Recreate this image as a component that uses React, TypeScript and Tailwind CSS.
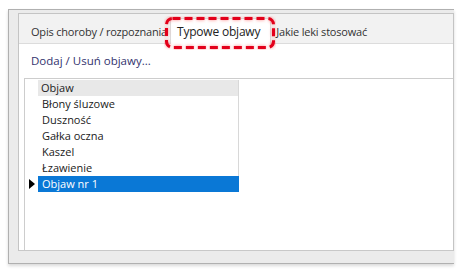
import React from "react";

const ROWS = ["Błony śluzowe", "Duszność", "Gałka oczna", "Kaszel", "Łzawienie", "Objaw nr 1"];

export default function App() {
  const font = { fontFamily: '"Open Sans", "Noto Sans", sans-serif' };
  return (
    <div className="w-[464px] h-[277px] bg-white pl-[8px] pt-[9px] relative" style={font}>
      {/* outer frame */}
      <div className="w-[446px] h-[255px] border border-[#b0b0b0] border-r-0 bg-[#ebebeb] pl-[9px] pt-[3px] shadow-[0_2px_3px_rgba(0,0,0,0.15)]">
        <div className="w-[436px] h-[238px] border-l border-t border-r border-[#c4c4c4] flex flex-col bg-white">
          {/* tab strip */}
          <div className="h-[30px] bg-[#f2f2f2] border-b border-[#dcdcdc] flex items-end pl-[10px] text-[11px] text-[#333] tracking-[-0.2px]">
            <div className="h-[22px] px-[2px] flex items-center">Opis choroby / rozpoznania</div>
            <div className="h-[26px] ml-[1px] pl-[6px] pr-[10px] flex items-center bg-white border-x border-t border-[#dcdcdc] -mb-px text-[12px] text-[#222]">
              Typowe objawy
            </div>
            <div className="h-[22px] pl-[5px] flex items-center">Jakie leki stosować</div>
          </div>
          {/* content */}
          <div className="flex-1 flex flex-col bg-white border-b border-[#c8c8c8]">
            <div className="h-[34px] pl-[12px] flex items-center text-[11.5px] text-[#33336e]">Dodaj / Usuń objawy...</div>
            <div className="flex-1 ml-[5px] border-l border-t border-[#cdcdcd] flex">
              <div className="w-[13px] flex flex-col pt-[17px]">
                {ROWS.map((r, i) => (
                  <div key={r} className="h-[16px] flex items-center justify-center">
                    {i === ROWS.length - 1 && (
                      <svg width="6" height="10" viewBox="0 0 6 10">
                        <path d="M0 0 L6 5 L0 10 Z" fill="#000" />
                      </svg>
                    )}
                  </div>
                ))}
              </div>
              <div className="w-[201px] flex flex-col pt-px">
                <div className="h-[16px] bg-[#e8e8e8] border-r border-[#d8d8d8] pl-[3px] flex items-center text-[11px] text-[#222]">Objaw</div>
                {ROWS.map((r, i) => (
                  <div
                    key={r}
                    className={
                      i === ROWS.length - 1
                        ? "h-[16px] bg-[#0a78d6] text-white pl-[4px] flex items-center text-[11px]"
                        : "h-[16px] border-r border-[#d8d8d8] pl-[4px] flex items-center text-[11px] text-[#1a1a1a]"
                    }
                  >
                    {r}
                  </div>
                ))}
              </div>
            </div>
          </div>
        </div>
      </div>
      {/* highlight around selected tab */}
      <svg className="absolute left-[164px] top-[16px]" width="112" height="34" viewBox="0 0 112 34">
        <defs>
          <filter id="glow" x="-10%" y="-30%" width="120%" height="160%">
            <feGaussianBlur stdDeviation="1.4" />
          </filter>
        </defs>
        <rect x="2.5" y="2.5" width="107" height="29" rx="6" fill="none" stroke="#ff4d4d" strokeOpacity="0.5" strokeWidth="4" strokeDasharray="8 4" filter="url(#glow)" />
        <rect x="2.5" y="2.5" width="107" height="29" rx="6" fill="none" stroke="#e3001b" strokeWidth="3" strokeDasharray="8 4" />
      </svg>
    </div>
  );
}
